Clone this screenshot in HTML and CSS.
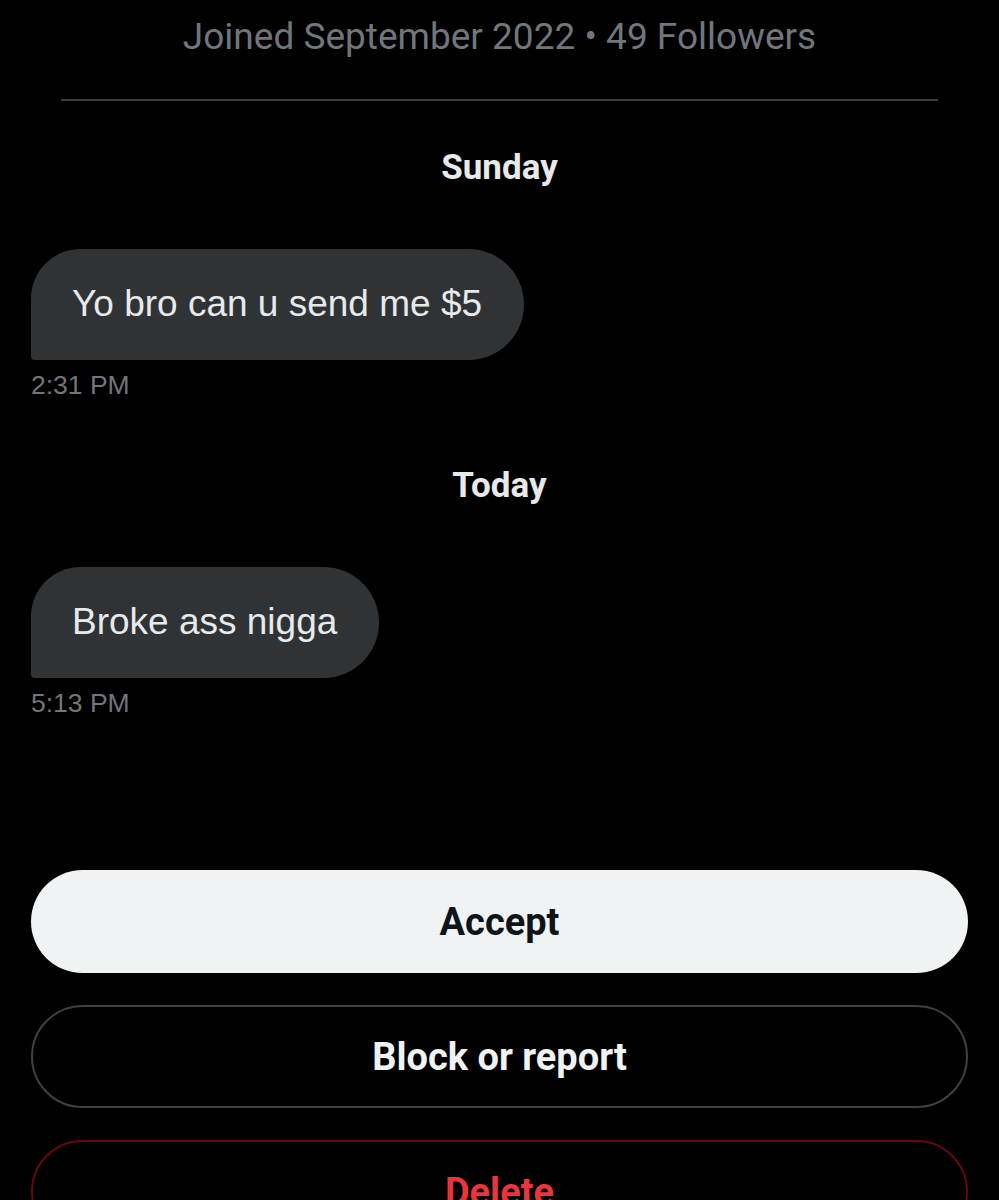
FILE: index.html
```html
<!DOCTYPE html>
<html>
<head>
    <title>Message request</title>
    <link rel="stylesheet" href="styles.css">
</head>
<body>
    <div class="page">
        <!-- profile summary -->
        <p class="joined">Joined September 2022 &bull; 49 Followers</p>
        <div class="divider"></div>

        <!-- conversation -->
        <div class="day">Sunday</div>
        <div class="msg">
            <div class="bubble">Yo bro can u send me $5</div>
            <div class="time">2:31 PM</div>
        </div>

        <div class="day day-today">Today</div>
        <div class="msg">
            <div class="bubble">Broke ass nigga</div>
            <div class="time">5:13 PM</div>
        </div>

        <!-- request actions -->
        <div class="actions">
            <button class="btn btn-accept">Accept</button>
            <button class="btn btn-block">Block or report</button>
            <button class="btn btn-delete">Delete</button>
        </div>
    </div>
</body>
</html>
```

FILE: styles.css
```css
body {
    margin: 0;
    background: #000;
    font-family: Roboto, "Liberation Sans", sans-serif;
    color: #e7e9ea;
    overflow: hidden;
}

.page {
    padding: 0 31px;
}

/* profile line at top */
.joined {
    margin: 17px 0 0;
    height: 40px;
    line-height: 40px;
    font-size: 37px;
    color: #71767b;
    text-align: center;
}

.divider {
    height: 2px;
    margin: 42px 30px 0;
    background: #3a3d41;
}

/* date separators */
.day {
    margin-top: 49px;
    height: 36px;
    line-height: 36px;
    font-size: 35px;
    font-weight: 700;
    text-align: center;
}

.day-today {
    margin-top: 68px;
}

/* message bubbles */
.msg {
    margin-top: 63px;
    display: flex;
    flex-direction: column;
    align-items: flex-start;
}

.bubble {
    background: #2f3336;
    padding: 33px 42px 34px 41px;
    font-family: "Liberation Sans", Arial, sans-serif;
    font-size: 37px;
    line-height: 44px;
    border-radius: 50px 56px 56px 4px;
}

.time {
    margin-top: 10px;
    font-family: "Liberation Sans", Arial, sans-serif;
    font-size: 26.5px;
    line-height: 30px;
    color: #71767b;
}

/* buttons */
.actions {
    margin-top: 152px;
    display: flex;
    flex-direction: column;
    gap: 32px;
}

.btn {
    height: 103px;
    border-radius: 52px;
    font-family: Roboto, "Liberation Sans", sans-serif;
    font-size: 38px;
    font-weight: 700;
    background: #000;
    box-sizing: border-box;
}

.btn-accept {
    background: #eff3f4;
    color: #0f1419;
    border: none;
}

.btn-block {
    color: #eff3f4;
    border: 2px solid #3e4144;
}

.btn-delete {
    color: #e8363c;
    border: 2px solid #67070f;
}
```
